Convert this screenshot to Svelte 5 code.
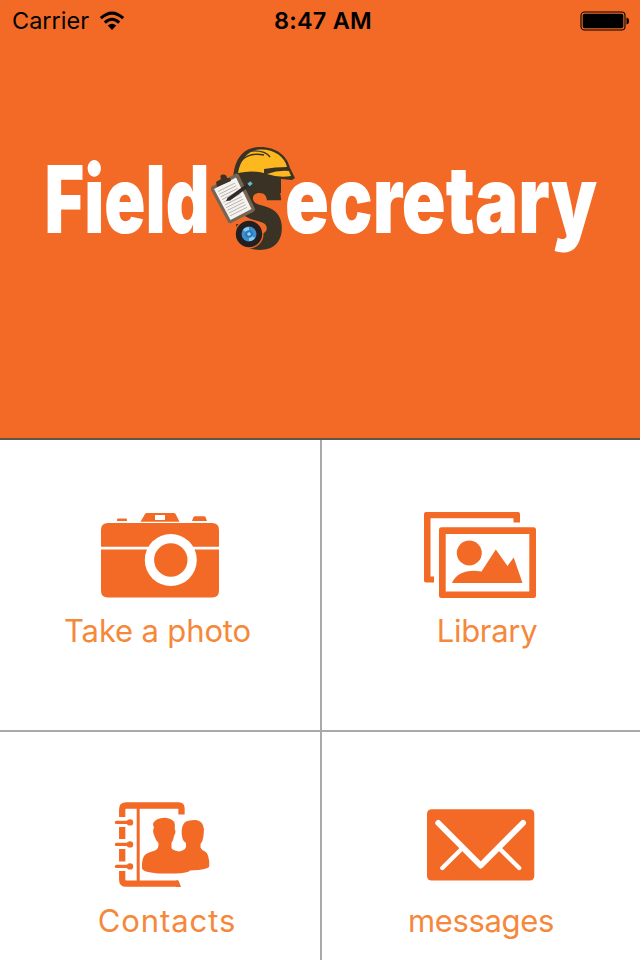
<script lang="ts">
	type Tile = { id: string; label: string; viewBox: string; shift: number; spacing: number };

	const tiles: Tile[] = [
		{ id: 'camera', label: 'Take a photo', viewBox: '96 508 128 96', shift: -2.5, spacing: -0.15 },
		{ id: 'library', label: 'Library', viewBox: '417 508 128 96', shift: 6, spacing: -0.3 },
		{ id: 'contacts', label: 'Contacts', viewBox: '96 800 128 96', shift: 7, spacing: 0.9 },
		{ id: 'messages', label: 'messages', viewBox: '417 800 128 96', shift: 0, spacing: -0.35 }
	];

	const ruled = [0, 1, 2, 3, 4, 5, 6, 7, 8, 9];
	const rings = [822, 844, 866];
</script>

<div class="screen">
	<header>
		<div class="status">
			<div class="carrier">
				<span>Carrier</span>
				<svg width="26" height="20" viewBox="0 0 26 20">
					<g fill="none" stroke="#000" stroke-width="3">
						<path d="M1.8 7.2Q13-3 24.2 7.2" />
						<path d="M5.8 11.6Q13 5 20.2 11.6" />
					</g>
					<path d="M8.8 14.6Q13 11 17.2 14.6L13 19Z" />
				</svg>
			</div>
			<span class="time">8:47 AM</span>
			<svg class="battery" width="50" height="20" viewBox="0 0 50 20">
				<rect x="1" y="1" width="44" height="18" rx="3.5" fill="none" stroke="#000" stroke-width="1.1" />
				<rect x="2.7" y="2.7" width="40.6" height="14.6" rx="2" />
				<path d="M46.5 6.5Q49 7 49 10T46.500 13.500Z" />
			</svg>
		</div>

		<svg class="logo" width="640" height="170" viewBox="0 120 640 170">
			<g class="wordmark">
				<text x="44.500" y="233" textLength="165" lengthAdjust="spacingAndGlyphs">Field</text>
				<text class="big" x="234" y="249" textLength="50" lengthAdjust="spacingAndGlyphs">S</text>
				<text x="285" y="233" textLength="312" lengthAdjust="spacingAndGlyphs">ecretary</text>
			</g>

			<!-- hard hat -->
			<path fill="#3b3226" d="M233 180C234 160 242 148 258 147C275 146 287 155 290 168L295 178L292 180L281 179V193H265V182L244 184L236 181Z" />
			<path fill="#fcb81e" d="M238 173C241 157 250 150 260 149.500C274 149 285 157 287 167Q275 167 264 169L264 173Q252 170 238 173Z" />
			<path fill="#fcb81e" d="M267 174Q278 170 289 171L291 176Q279 178 267 174Z" />
			<path fill="none" stroke="#3b3226" stroke-width="1.300" d="M241 161Q249 152 264 155M251 151Q265 150 270 157" />

			<!-- clipboard -->
			<path fill="#746555" d="M211 187L236 173.500Q238 173 239 175L255 209Q255 211 253 212L231 223Q229 224 228 222L211 190Z" />
			<path fill="#f6f2ef" d="M214 189L236 177.500L251.500 209L230.500 220Z" />
			<g stroke="#aaa39d" stroke-width=".8">
				{#each ruled as i}
					<path d="M{218 + i * 1.35} {191.5 + i * 2.7}l17-8.500" />
				{/each}
			</g>
			<path fill="#3b3226" d="M217 187L216 182L221 179Q219 174 224 174.500Q227 175 227 178L230 178L231 181Z" />
			<path stroke="#2e2a27" stroke-width="3.500" d="M229 199L249 184.500" />
			<path stroke="#67bccc" stroke-width="3.500" d="M248.500 185L251.500 182.500" />
			<path fill="#2e2a27" d="M226 201L228 197L230.500 200.500Z" />

			<!-- lens -->
			<circle cx="249" cy="234" r="14.500" fill="#f26a26" />
			<circle cx="249" cy="234" r="13.200" fill="#231f20" />
			<circle cx="249" cy="234" r="7.500" fill="#3a8fd0" />
			<path fill="#8ccbee" d="M249 234L243 230Q245 227 249 227ZM249 234L255 238Q253 241 249 241Z" />
			<circle cx="249" cy="234" r="3.800" fill="#2878b8" />
			<circle cx="249" cy="234" r="1.800" fill="#9bd4f2" />
		</svg>
	</header>

	<main>
		{#each tiles as tile (tile.id)}
			<div class="tile">
				<svg width="128" height="96" viewBox={tile.viewBox} fill="#f26a26">
					{#if tile.id === 'camera'}
						<path d="M117 521V519.500Q117 518.500 118 518.500H126Q127 518.500 127 519.500V521Z" />
						<path d="M192 521L193.500 517Q194 516.200 195 516.200H204Q205 516.200 205.500 517L207 521Z" />
						<path fill-rule="evenodd" d="M140.500 521.700L145 514Q145.600 513 147 513H173.500Q175 513 175.600 514L179.500 521.700ZM155 515V520H165V515Z" />
						<path d="M101 546.700V530Q101 523 108 523H212Q219 523 219 530V546.700ZM101 549.500H219V590.500Q219 597.500 212 597.500H108Q101 597.500 101 590.500Z" />
						<circle cx="170.800" cy="560" r="26" fill="#fff" />
						<circle cx="170.800" cy="560" r="16.700" />
					{:else if tile.id === 'library'}
						<path d="M426 512H518Q520 512 520 514V522.500H513.500V518.300H430.500V576.500H434V582.500H426Q424 582.500 424 580.500V514Q424 512 426 512Z" />
						<path fill-rule="evenodd" d="M441.500 527.300H533.500Q536 527.300 536 530V595.500Q536 598 533.500 598H441.500Q439 598 439 595.500V530Q439 527.300 441.500 527.300ZM445.700 534V591.500H529.300V534Z" />
						<circle cx="469.300" cy="553" r="12.500" />
						<path d="M452 583C456 573 468 569 481.500 571.500L495.800 549.500L507.500 566L513.700 557.500L522.500 583Z" />
					{:else if tile.id === 'contacts'}
						<g fill="none" stroke="#f26a26" stroke-width="6.300">
							<path d="M122.200 817V809.500Q122.200 805.500 126.200 805.500H178.500Q181.500 805.500 181.500 808.500V814.500" />
							<path d="M122.200 827V839M122.200 849V861.500" />
							<path d="M122.200 871V879.500Q122.200 883.700 126.200 883.700H178" />
							<path stroke-width="3" d="M138.200 808V882" />
							{#each rings as y}
								<path stroke-width="3.300" stroke-linecap="round" d="M116.500 {y + 0.4}H130" />
							{/each}
						</g>
						{#each rings as y}
							<circle cx="130" cy={y + 0.4} r="3.200" />
						{/each}
						<path d="M176 880.500H178.500L181 887H176Z" />
						<path d="M154 835C152.500 831 153.300 829 154 827.500Q151.500 823 155.500 820.500Q159 817.700 165 817.700Q171 818 174.300 822Q175.500 825 174.700 829Q176.500 832 174 836Q173.500 840 171.500 843V848Q172 850 179 851.500L182.500 850.500Q185.500 849.500 186 847V843Q182.500 841 182 836C181 829 182.500 824 186 821.500Q190 819.700 196 820Q203 821 204 829L203.500 836Q203 841 200.500 844V847.500Q201 849.500 205 851.500Q209.500 854 209.300 866Q209.300 869.700 190 870.500Q188 873 175 873.500H158Q142 872 142 868Q141.500 857 146 854Q149 852 155 850.500Q158.800 849 158.500 843Q155.500 840 154 835Z" />
					{:else}
						<rect x="427" y="809.300" width="107.300" height="71.300" rx="4.500" />
						<g fill="none" stroke="#fff" stroke-linecap="round">
							<path stroke-width="6" stroke-linejoin="round" d="M438.300 823L480.700 865.500L523 823" />
							<path stroke-width="4.300" d="M461 849.500L442.300 868M500.500 849.500L519.200 868" />
						</g>
					{/if}
				</svg>
				<span class="label" style="left: {tile.shift}px; letter-spacing: {tile.spacing}px">{tile.label}</span>
			</div>
		{/each}
	</main>
</div>

<style>
	:global(body) {
		background: #fff;
	}

	.screen {
		height: 960px;
		overflow: hidden;
		display: flex;
		flex-direction: column;
		font-family: Inter, 'Liberation Sans', sans-serif;
	}

	header {
		box-sizing: border-box;
		flex: none;
		height: 440px;
		background: #f26a26;
		border-bottom: 2px solid #60544c;
	}

	.status {
		display: grid;
		grid-template-columns: 1fr auto 1fr;
		align-items: center;
		height: 41px;
		padding: 0 10px 0 12px;
		font-size: 23.5px;
		color: #000;
	}

	.carrier {
		display: flex;
		align-items: center;
		gap: 10px;
	}

	.time {
		position: relative;
		left: 2px;
		font-weight: 600;
		letter-spacing: 0.2px;
	}

	.battery {
		justify-self: end;
	}

	.logo {
		display: block;
		margin-top: 79px;
	}

	.wordmark {
		font-size: 93px;
		font-weight: 900;
		fill: #fff;
	}

	.big {
		font-size: 98px;
		fill: #3b3226;
	}

	main {
		flex: 1;
		display: grid;
		grid-template-columns: 320px 318px;
		grid-template-rows: 290px 290px;
		gap: 2px;
		background: #a9a9ab;
	}

	.tile {
		display: flex;
		flex-direction: column;
		align-items: center;
		padding-top: 68px;
		background: #fff;
	}

	.tile svg {
		flex: none;
	}

	.label {
		position: relative;
		margin-top: 7px;
		font-size: 31px;
		line-height: 40px;
		color: #f5883a;
		white-space: nowrap;
	}

	.tile:nth-child(n + 3) .label {
		margin-top: 5px;
	}
</style>
